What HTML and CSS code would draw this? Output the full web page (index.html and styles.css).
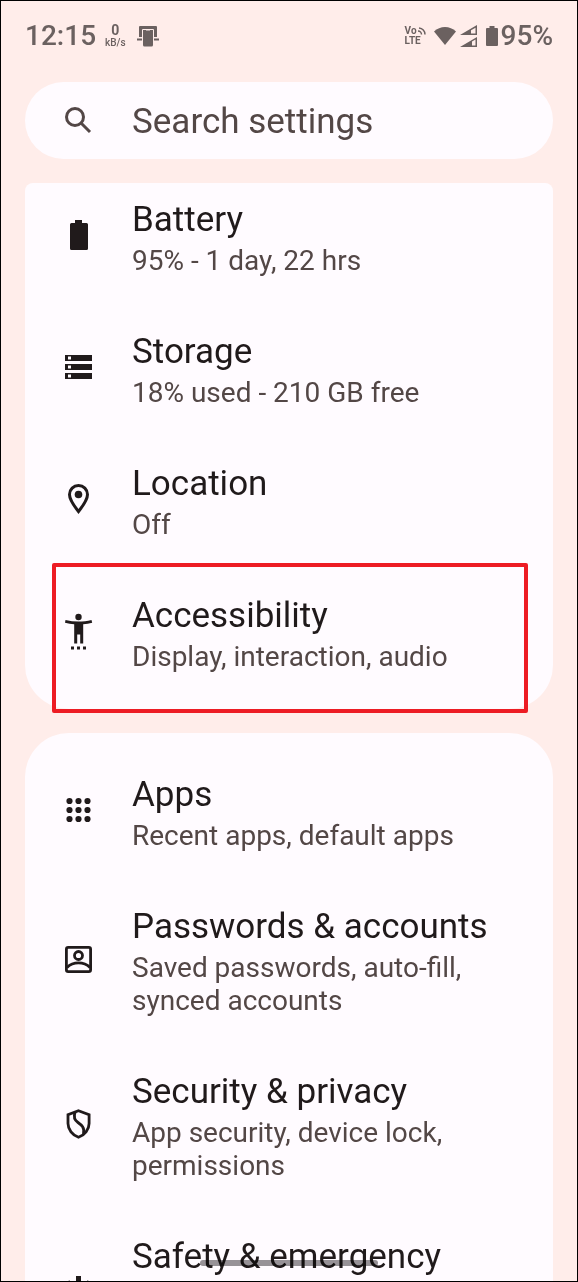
FILE: index.html
```html
<!DOCTYPE html>
<html lang="en">
<head>
<meta charset="utf-8">
<meta name="viewport" content="width=device-width, initial-scale=1">
<title>Settings</title>
<link rel="stylesheet" href="styles.css">
</head>
<body>
<div class="screen">
  <header class="status">
    <div class="status-group">
      <span class="clock">12:15</span>
      <span class="net"><b>0</b><span>kB/s</span></span>
      <svg class="dock" viewBox="0 0 22 22" aria-hidden="true">
        <path d="M2 12V2a1 1 0 0 1 1-1h16a1 1 0 0 1 1 1v10h-3V5H5v7z"/>
        <path d="M0 13.500h5v2H0zM17 13.500h5v2h-5z"/>
        <path fill-rule="evenodd" d="M7.500 3.500h7a1.500 1.500 0 0 1 1.500 1.500v15a1.500 1.500 0 0 1-1.500 1.500h-7A1.500 1.500 0 0 1 6 20V5a1.500 1.500 0 0 1 1.500-1.500zM9 4.500v1h4v-1z"/>
        <path class="gap-line" d="M5.500 12V4.500h11V12"/>
      </svg>
    </div>
    <div class="status-group status-right">
      <span class="volte"><span class="vo">Vo<svg viewBox="0 0 8 8" aria-hidden="true"><path d="M1 1a6.500 6.500 0 0 1 6 6.500M0 4a3.500 3.500 0 0 1 3.500 3.500"/></svg></span><span>LTE</span></span>
      <svg class="wifi" viewBox="0 0 22 20" aria-hidden="true"><path d="M0 5.500C3 2.500 7 1 11 1s8 1.500 11 4.500L11 19z"/></svg>
      <svg class="signal" viewBox="0 0 18 22" aria-hidden="true">
        <path fill-rule="evenodd" d="M0 10 17 0v10zM11 5.300V8.500h4.500V2.800z"/>
        <path fill-rule="evenodd" d="M0 22 17 12v10zM12 16.500v4h3.500v-6z"/>
      </svg>
      <svg class="charge" viewBox="0 0 12 20" aria-hidden="true"><path d="M3.500 0h5v2H11a1 1 0 0 1 1 1v16a1 1 0 0 1-1 1H1a1 1 0 0 1-1-1V3a1 1 0 0 1 1-1h2.500z"/></svg>
      <span class="percent">95%</span>
    </div>
  </header>

  <main class="content">
    <label class="search">
      <svg class="icon" viewBox="0 0 32 32" aria-hidden="true"><g fill="none" stroke="currentColor" stroke-width="3"><circle cx="13" cy="12" r="8.500"/><path d="m19 18 9 9"/></g></svg>
      <input class="search-input" type="search" placeholder="Search settings" aria-label="Search settings">
    </label>

    <ul class="card card-scrolled">
      <li><a class="row" href="#battery">
        <svg class="icon" viewBox="0 0 32 32" aria-hidden="true"><path d="M13 1h7v3h4.500A1.500 1.500 0 0 1 26 5.500v24a1.500 1.500 0 0 1-1.500 1.500h-15A1.500 1.500 0 0 1 8 29.500v-24A1.500 1.500 0 0 1 9.500 4H13z"/></svg>
        <span class="text"><span class="title">Battery</span><span class="sub">95% - 1 day, 22 hrs</span></span>
      </a></li>
      <li><a class="row" href="#storage">
        <svg class="icon" viewBox="0 0 32 32" aria-hidden="true"><path fill-rule="evenodd" d="M3 4h27v6H3zM6 5.500v3h3v-3zM3 13h27v6H3zM6 14.500v3h3v-3zM3 22h27v6H3zM6 23.500v3h3v-3z"/></svg>
        <span class="text"><span class="title">Storage</span><span class="sub">18% used - 210 GB free</span></span>
      </a></li>
      <li><a class="row" href="#location">
        <svg class="icon" viewBox="0 0 32 32" aria-hidden="true"><path fill="none" stroke="currentColor" stroke-width="3" d="M16.500 28.500C10.500 21 7.500 16 7.500 11.500a9 9 0 0 1 18 0c0 4.500-3 9.500-9 17z"/><circle cx="16.500" cy="11.500" r="3.800"/></svg>
        <span class="text"><span class="title">Location</span><span class="sub">Off</span></span>
      </a></li>
      <li><a class="row highlighted" href="#accessibility">
        <svg class="icon" viewBox="0 0 32 32" aria-hidden="true"><circle cx="16.500" cy="2" r="3.200"/><path d="M3.500 5c8.500 2 17.500 2 26 0l.700 2.700c-3 .800-6 1.300-9 1.600v19.200h-3V19.500h-3v9h-3V9.300c-3-.300-6-.800-9.200-1.600z"/><path d="M9 31.500h3v3H9zM15 31.500h3v3h-3zM21 31.500h3v3h-3z"/></svg>
        <span class="text"><span class="title">Accessibility</span><span class="sub">Display, interaction, audio</span></span>
      </a></li>
    </ul>

    <ul class="card">
      <li><a class="row" href="#apps">
        <svg class="icon" viewBox="0 0 32 32" aria-hidden="true"><circle cx="7.500" cy="7" r="3.100"/><circle cx="16.500" cy="7" r="3.100"/><circle cx="25.500" cy="7" r="3.100"/><circle cx="7.500" cy="16" r="3.100"/><circle cx="16.500" cy="16" r="3.100"/><circle cx="25.500" cy="16" r="3.100"/><circle cx="7.500" cy="25" r="3.100"/><circle cx="16.500" cy="25" r="3.100"/><circle cx="25.500" cy="25" r="3.100"/></svg>
        <span class="text"><span class="title">Apps</span><span class="sub">Recent apps, default apps</span></span>
      </a></li>
      <li><a class="row" href="#passwords">
        <svg class="icon" viewBox="0 0 32 32" aria-hidden="true"><g fill="none" stroke="currentColor" stroke-width="2.800"><rect x="4.400" y="4.400" width="24.200" height="24.200" rx="1.800"/><circle cx="16.500" cy="12.500" r="4"/><path d="M5 24.500c3-3 7-4.600 11.500-4.600S25 21.500 28 24.500"/></g></svg>
        <span class="text"><span class="title">Passwords &amp; accounts</span><span class="sub">Saved passwords, auto-fill, synced accounts</span></span>
      </a></li>
      <li><a class="row" href="#security">
        <svg class="icon" viewBox="0 0 32 32" aria-hidden="true"><g fill="none" stroke="currentColor" stroke-width="2.800"><path d="m16.500 2.800 10.600 4v8.700c0 6-4.500 11.500-10.600 13.800C10.400 27 6 21.500 6 15.500V6.800z"/><path d="M13 4.500c-1.500 4-.500 7.500 3 10s7 5 5.500 11.500"/></g></svg>
        <span class="text"><span class="title">Security &amp; privacy</span><span class="sub">App security, device lock, permissions</span></span>
      </a></li>
      <li><a class="row row-tall" href="#safety">
        <svg class="icon" viewBox="0 0 32 32" aria-hidden="true"><g stroke="currentColor" stroke-width="5"><path d="M16.500 3v26M5.700 9.500l21.600 13M27.300 9.500l-21.600 13"/></g></svg>
        <span class="text"><span class="title">Safety &amp; emergency</span></span>
      </a></li>
    </ul>
  </main>
  <div class="home-bar"></div>
</div>
</body>
</html>
```
FILE: styles.css
```css
* { box-sizing: border-box; }

body {
  margin: 0;
  font-family: Roboto, "Liberation Sans", sans-serif;
  color: #201a1b;
  background: #ffedea;
}

.screen {
  position: relative;
  height: 100vh;
  overflow: hidden;
  border: 1px solid #000;
  background: #ffedea;
}

.status {
  display: flex;
  align-items: center;
  justify-content: space-between;
  height: 81px;
  padding: 0 24px 12px;
  color: #6b6160;
  font-size: 28px;
  font-weight: 500;
  line-height: 33px;
}
.status svg { fill: currentColor; }
.status-group { display: flex; align-items: center; }
.status-right { gap: 8px; }

.net {
  display: flex;
  flex-direction: column;
  align-items: center;
  margin: 0 11px 0 9px;
  font-size: 10px;
  line-height: 12px;
}
.net b { font-size: 14px; line-height: 14px; }
.dock { width: 22px; height: 22px; }
.status .gap-line { fill: none; stroke: #ffedea; stroke-width: 1; }

.volte {
  display: flex;
  flex-direction: column;
  font-size: 10px;
  font-weight: 700;
  line-height: 10px;
}
.vo { display: flex; align-items: center; gap: 1px; }
.vo svg { width: 8px; height: 8px; fill: none; stroke: currentColor; stroke-width: 1.5; }
.wifi { width: 22px; height: 20px; }
.signal { width: 18px; height: 22px; margin-left: -4px; }
.charge { width: 12px; height: 20px; }
.percent { margin-left: -5px; }

.content { padding: 0 24px; }

.search {
  display: flex;
  align-items: center;
  gap: 38px;
  height: 77px;
  padding: 0 37px;
  border-radius: 39px;
  background: #fffbff;
  color: #534746;
}
.search-input {
  flex: 1;
  min-width: 0;
  padding: 2px 0 0;
  border: 0;
  outline: 0;
  background: transparent;
  color: inherit;
  font: inherit;
  font-size: 35px;
  line-height: 42px;
}
.search-input::placeholder { color: inherit; opacity: 1; }

.icon {
  flex: none;
  width: 32px;
  height: 32px;
  overflow: visible;
  fill: currentColor;
}

.card {
  margin: 24px 0 0;
  padding: 13px 0 10px;
  list-style: none;
  border-radius: 44px;
  background: #fffbff;
}
.card-scrolled {
  padding-top: 0;
  border-radius: 8px 8px 44px 44px;
}
.card-scrolled li:first-child .row { padding-top: 16px; }

.row {
  position: relative;
  display: flex;
  align-items: center;
  gap: 38px;
  padding: 28px 36px 26px 37px;
  color: inherit;
  text-decoration: none;
}
.row .icon { margin-bottom: 6px; }
.row-tall { min-height: 165px; }

.text {
  display: flex;
  flex-direction: column;
  align-self: flex-start;
  gap: 3px;
  min-width: 0;
}
.title { font-size: 35px; line-height: 42px; }
.sub { font-size: 28px; line-height: 33px; color: #534746; }

.highlighted::after {
  content: "";
  position: absolute;
  inset: -4px 25px -14px 27px;
  border: 4px solid #ed1c24;
  border-radius: 2px;
}

.home-bar {
  position: absolute;
  bottom: 15px;
  left: 50%;
  width: 178px;
  height: 6px;
  margin-left: -89px;
  border-radius: 3px;
  background: #979497;
  mix-blend-mode: multiply;
}
```
